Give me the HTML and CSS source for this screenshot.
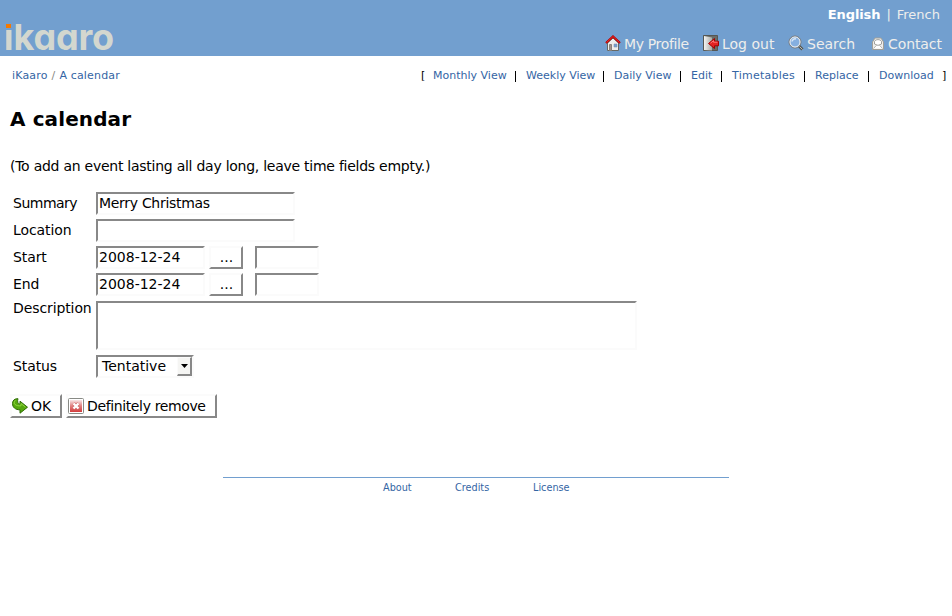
FILE: index.html
```html
<!DOCTYPE html>
<html lang="en">
<head>
<meta charset="utf-8">
<title>A calendar</title>
<link rel="stylesheet" href="styles.css">
</head>
<body>
<header class="header">
  <a class="logo"><span class="logo-i">i</span>kaaro</a>
  <div class="header-side">
    <div class="languages"><b>English</b><span class="bar">|</span><a>French</a></div>
    <nav class="tools">
      <a class="tool profile"><svg width="16" height="16" viewBox="0 0 16 16"><path d="M2.500 8L8 3l5.500 5v7.500h-11z" fill="#eeeeec" stroke="#666864"/><path d="M4.500 9.500h2v6h-2z" fill="#a59288" stroke="#8a817b"/><path d="M9 9h3v3H9z" fill="#729fcf" stroke="#8296b4" stroke-width=".6"/><path d="M1 8L8 1.500 15 8" fill="none" stroke="#b00000" stroke-width="2.200"/><path d="M1.500 7.500L8 1.500l6.500 6" fill="none" stroke="#ef2929"/></svg><span>My Profile</span></a>
      <a class="tool logout"><svg width="16" height="16" viewBox="0 0 16 16"><defs><linearGradient id="door"><stop stop-color="#f4f4f2"/><stop offset="1" stop-color="#aaaca8"/></linearGradient></defs><path d="M.5.500h14v15H.5z" fill="#6a6c68" stroke="#555753"/><path d="M1 1l8 1.500v13L1 15z" fill="url(#door)"/><path d="M5.500 8.500l6-5v2.700h4v4.600h-4v2.700z" fill="#e32222" stroke="#a40000"/><path d="M7.500 8.200L10.500 5.700v1.500h4" fill="none" stroke="#f77"/></svg><span>Log out</span></a>
      <a class="tool search"><svg width="16" height="16" viewBox="0 0 16 16"><path d="M10.500 10.500l4 4" stroke="#555753" stroke-width="3"/><path d="M11.500 11.500l3 3" stroke="#babdb6"/><circle cx="7" cy="7" r="6" fill="#a9c8ea" stroke="#777"/><circle cx="7" cy="7" r="5" fill="#85afe0" stroke="#eeeeec"/><path d="M4 6.500a3 3 0 0 1 4-2.500" fill="none" stroke="#d7e7f8" stroke-width="1.500"/></svg><span>Search</span></a>
      <a class="tool contact"><svg width="16" height="16" viewBox="0 0 16 16"><path d="M2.500 7l2.500-4h6l2.500 4v7.500h-11z" fill="#eeeeec" stroke="#a09f98"/><path d="M4.500 9V6.500c1-2.500 6-2.500 7 0V9L8 10.500z" fill="#fff" stroke="#8b8d88" stroke-width=".8"/><path d="M3.500 13.500l3-3.200h3l3 3.200" fill="#fff" stroke="#a4a6a2" stroke-width=".8"/></svg><span>Contact</span></a>
    </nav>
  </div>
</header>
<div class="location">
  <div class="crumbs"><a>iKaaro</a><i>/</i><a>A calendar</a></div>
  <nav class="views">
    <span class="open">[</span><a class="monthly">Monthly View</a><a class="weekly">Weekly View</a><a class="daily">Daily View</a><a class="edit">Edit</a><a class="timetables">Timetables</a><a class="replace">Replace</a><a class="download">Download</a><span>]</span>
  </nav>
</div>
<main>
  <h1>A calendar</h1>
  <p class="hint">(To add an event lasting all day long, leave time fields empty.)</p>
  <form>
    <div class="row"><label class="tight">Summary</label><div class="field wide">Merry Christmas</div></div>
    <div class="row"><label>Location</label><div class="field wide"></div></div>
    <div class="row"><label>Start</label><div class="field date">2008-12-24</div><div class="button pick">...</div><div class="field time"></div></div>
    <div class="row"><label>End</label><div class="field date">2008-12-24</div><div class="button pick">...</div><div class="field time"></div></div>
    <div class="row description"><label>Description</label><div class="field area"></div></div>
    <div class="row"><label>Status</label><div class="field select"><span>Tentative</span><div class="arrow"><svg width="7" height="4"><path d="M0 0h7L3.500 4z"/></svg></div></div></div>
    <div class="actions">
      <div class="button ok"><svg width="16" height="16" viewBox="0 0 16 16"><path d="M6 .7C2.500.5.500 2.500.5 5.500c0 4 3 6.300 7.500 6.300v3.400l7.500-6-7.500-6v3.100C6 6 5 3.500 6 .7z" fill="#56a80e" stroke="#2f6c05"/><path d="M3.300 2.300C.2 6 4 8.200 9 7.800V5.500l4.500 3.700" fill="none" stroke="#8ed63c"/></svg><span>OK</span></div>
      <div class="button remove"><svg width="16" height="16" viewBox="0 0 16 16"><defs><linearGradient id="red" x2="0" y2="1"><stop stop-color="#f8e8e8"/><stop offset=".5" stop-color="#e08080"/><stop offset="1" stop-color="#d23c3c"/></linearGradient></defs><rect x=".5" y=".5" width="15" height="15" rx="1" fill="#fff" stroke="#888a85"/><path d="M2 2h12v12H2z" fill="url(#red)"/><path d="M5.500 5.500l5 5m0-5l-5 5" stroke="#d06868" stroke-width="3.500"/><path d="M5.500 5.500l5 5m0-5l-5 5" stroke="#fff" stroke-width="2.400"/></svg><span>Definitely remove</span></div>
    </div>
  </form>
</main>
<footer><a class="about">About</a><a class="credits">Credits</a><a>License</a></footer>
</body>
</html>
```

FILE: styles.css
```css
* { box-sizing: border-box; }
body { margin: 0; background: #fff; color: #000; font: 14px/18px "DejaVu Sans", sans-serif; }
svg { display: block; flex: none; }
.header { height: 56px; background: #729fcf; display: flex; justify-content: space-between; color: #fff; }
.logo { position: relative; padding: 15px 0 0 4px; font: 700 36px/44px Inter, sans-serif; font-feature-settings: "cv11"; letter-spacing: -.2px; color: #d3d7cf; white-space: nowrap; }
.logo-i { background: linear-gradient(transparent 14px, #d3d7cf 14px); background-clip: text; color: transparent; }
.logo::before { content: ""; position: absolute; left: 6px; top: 24px; width: 5px; height: 4px; background: #f57900; }
.header-side { width: 348px; color: #eeeeec; }
.languages { display: flex; height: 35px; padding: 6px 12px 0 0; justify-content: flex-end; font-size: 13px; }
.languages b { color: #fff; letter-spacing: -.1px; }
.bar { margin: 0 6px; }
.tools { display: flex; }
.tool { display: flex; gap: 3px; white-space: nowrap; }
.profile { width: 99px; padding-left: 1px; letter-spacing: -.35px; }
.logout { width: 85px; }
.search { width: 82px; }
.contact { gap: 2px; letter-spacing: -.1px; }
.location { height: 38px; padding: 11px 0 0 12px; display: flex; font-size: 11px; }
.location a, footer a { color: #3465a4; }
.crumbs { width: 409px; white-space: nowrap; letter-spacing: .16px; }
.crumbs i { color: #888a85; margin: 0 4px; font-style: normal; }
.views { display: flex; white-space: nowrap; }
.open { width: 12px; }
.views a { position: relative; }
.views a:not(.download)::after { content: ""; position: absolute; right: 10px; top: 4px; width: 1px; height: 11px; background: #000; }
.monthly { width: 93px; }
.weekly { width: 88px; }
.daily { width: 77px; }
.edit { width: 41px; }
.timetables { width: 83px; letter-spacing: .25px; }
.replace { width: 64px; }
.download { width: 63px; }
main { padding: 12px 10px 0; }
h1 { margin: 0; font: 700 20px/26px "DejaVu Sans", sans-serif; letter-spacing: .1px; }
.hint { margin: 25px 0 17px; letter-spacing: -.255px; }
.row { display: flex; height: 27px; white-space: nowrap; }
.row label { width: 86px; padding: 2px 0 0 3px; letter-spacing: -.1px; }
.row .tight { letter-spacing: -.5px; }
.field { height: 23px; border: 2px solid; border-color: #888 #fbfbfb #fbfbfb #888; padding: 0 1px; }
.wide { width: 199px; letter-spacing: -.3px; }
.date { width: 109px; }
.button { border: 2px solid; border-color: #fbfbfb #888 #888 #fbfbfb; display: flex; height: 23px; }
.pick { width: 34px; margin: 0 12px 0 4px; padding-left: 1px; justify-content: center; }
.time { width: 64px; }
.description { height: 55px; }
.row.description label { padding-top: 0; margin-top: -1px; }
.area { width: 541px; height: 49px; margin-top: 1px; }
.select { width: 98px; padding: 0 0 0 4px; display: flex; justify-content: space-between; }
.arrow { width: 15px; height: 19px; border: 1px solid; border-color: #fbfbfb #888 #888 #fbfbfb; border-width: 1px 2px 2px 1px; background: #f5f5f3; display: grid; place-items: center; }
.actions { display: flex; gap: 4px; margin-top: 12px; }
.actions .button { height: 24px; gap: 3px; padding-top: 1px; white-space: nowrap; }
.actions svg { margin-top: 1px; }
.ok { width: 52px; }
.remove { width: 151px; letter-spacing: -.37px; }
footer { width: 506px; margin: 59px auto 0; padding: 1px 0 0 160px; border-top: 1px solid #729fcf; display: flex; font-size: 9.7px; }
.about { width: 72px; }
.credits { width: 78px; }
```
